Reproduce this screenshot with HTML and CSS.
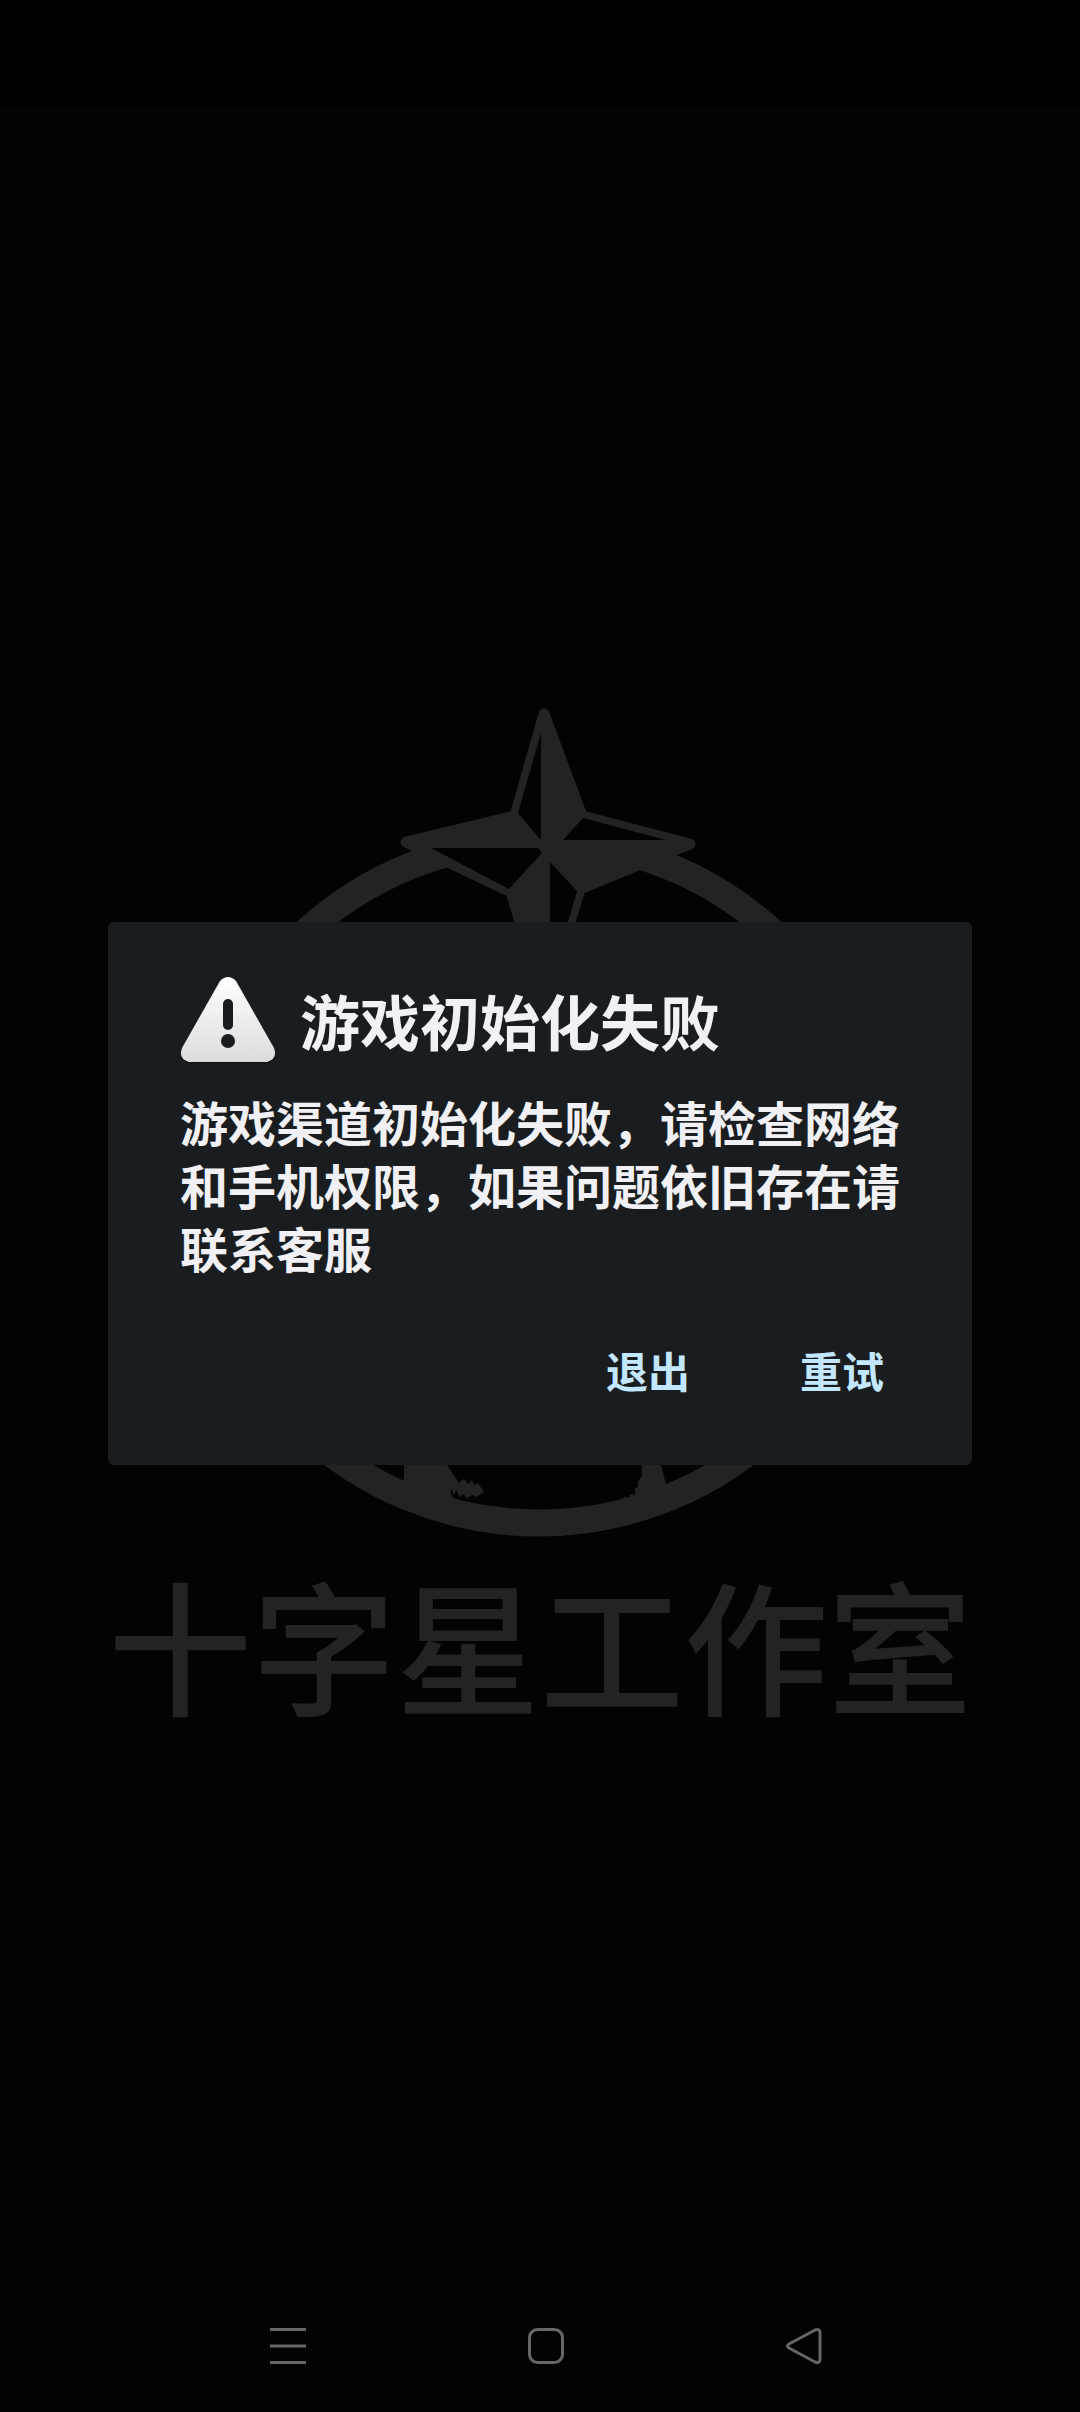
FILE: index.html
```html
<!DOCTYPE html>
<html lang="zh-CN">
<head>
    <meta charset="UTF-8">
    <meta name="viewport" content="width=device-width, initial-scale=1.0">
    <title>游戏初始化失败</title>
    <link rel="stylesheet" href="styles.css">
</head>
<body>
    <div class="status-bar"></div>

    <main class="stage">
        <!-- Splash screen behind the dialog -->
        <div class="splash">
            <svg class="splash-logo" viewBox="180 700 720 840" aria-hidden="true">
                <!-- Ring -->
                <ellipse cx="539" cy="1182" rx="343" ry="341" fill="none" stroke="#232323" stroke-width="27"/>

                <!-- Star -->
                <path d="M544 714 L582 816 L690 844 L580 889 L545 1005 L511 892 L406 842 L515 816 Z" fill="#232323" stroke="#232323" stroke-width="11" stroke-linejoin="round"/>
                <path d="M541 733 L518 813 L540 839 H541 Z" fill="#030303"/>
                <path d="M583 818 L666 840 H563 Z" fill="#030303"/>
                <path d="M431 848 H538 L542 853 L509 889 Z" fill="#030303"/>
                <path d="M550 862 L577 891 L550 985 Z" fill="#030303"/>

                <!-- Figures standing in the ring -->
                <path d="M404 1440 V1500 L440 1514 L456 1504 L451 1494 L451 1487 L454 1496 L456 1490 L460 1498 L463 1494 L467 1498 L472 1495 L476 1497 L484 1492 L478 1483 L474 1485 L472 1480 L468 1484 L464 1479 L459 1483 L447 1465 L440 1440 Z" fill="#232323"/>
                <path d="M640 1440 L642 1476 L638 1481 V1487 L635 1488 V1495 L630 1494 V1500 L625 1496 L619 1504 L620 1512 L668 1492 L661 1465 L660 1440 Z" fill="#232323"/>
            </svg>
            <p class="splash-name">十字星工作室</p>
        </div>

        <!-- Error dialog -->
        <section class="dialog" role="alertdialog" aria-labelledby="dialogTitle" aria-describedby="dialogMessage">
            <header class="dialog-header">
                <svg class="dialog-icon" viewBox="0 0 96 96" aria-hidden="true">
                    <defs>
                        <linearGradient id="warningFill" x1="0" y1="0" x2="0" y2="1">
                            <stop offset="0" stop-color="#ffffff"/>
                            <stop offset="1" stop-color="#dcdcdc"/>
                        </linearGradient>
                    </defs>
                    <path d="M40 9 Q48 1 56 9 L94 77 Q98 88 87 91 H9 Q-2 88 2 77 Z" fill="#0d0f10"/>
                    <path d="M40 9 Q48 1 56 9 L94 76 Q98 87 87 90 H9 Q-2 87 2 76 Z" fill="url(#warningFill)"/>
                    <rect x="43" y="27" width="10" height="31" rx="5" fill="#1a1d1f"/>
                    <circle cx="48" cy="69" r="7" fill="#1a1d1f"/>
                </svg>
                <h1 class="dialog-title" id="dialogTitle">游戏初始化失败</h1>
            </header>
            <p class="dialog-message" id="dialogMessage">游戏渠道初始化失败，请检查网络和手机权限，如果问题依旧存在请联系客服</p>
            <div class="dialog-actions">
                <button class="dialog-button" type="button">退出</button>
                <button class="dialog-button" type="button">重试</button>
            </div>
        </section>
    </main>

    <!-- System navigation -->
    <nav class="nav-bar">
        <button class="nav-button" type="button" aria-label="菜单">
            <svg class="nav-icon" viewBox="0 0 40 40">
                <path d="M2 3.5 H38 M2 20 H38 M2 36.5 H38"/>
            </svg>
        </button>
        <button class="nav-button" type="button" aria-label="主页">
            <svg class="nav-icon" viewBox="0 0 40 40">
                <rect x="3.5" y="3.5" width="33" height="33" rx="8"/>
            </svg>
        </button>
        <button class="nav-button" type="button" aria-label="返回">
            <svg class="nav-icon" viewBox="0 0 40 40">
                <path d="M5 18 L31 4 Q36 2 36 7 V33 Q36 38 31 36 L5 22 Q2 20 5 18 Z"/>
            </svg>
        </button>
    </nav>
</body>
</html>
```

FILE: styles.css
```css
* {
    margin: 0;
    padding: 0;
    box-sizing: border-box;
}

body {
    min-height: 100vh;
    display: flex;
    flex-direction: column;
    background: #030303;
    font-family: "Noto Sans CJK SC", sans-serif;
}

.status-bar {
    height: 106px;
    background: #000000;
}

/* The splash and the dialog share one grid cell */
.stage {
    flex: 1;
    display: grid;
    grid-template-columns: 100%;
    align-items: center;
    justify-items: center;
}

.splash,
.dialog {
    grid-area: 1 / 1;
}

/* Splash */
.splash {
    width: 100%;
    padding-top: 40px;
    display: flex;
    flex-direction: column;
    align-items: center;
    gap: 16px;
}

.splash-logo {
    width: 66.6667%;
}

.splash-name {
    color: #232323;
    font-size: 144px;
    font-weight: 500;
    line-height: 172px;
    white-space: nowrap;
}

/* Dialog */
.dialog {
    position: relative;
    width: 80%;
    padding: 50px 64px 48px 72px;
    border-radius: 6px;
    background: #1a1d1f;
    color: #f1f1f5;
}

.dialog-header {
    display: flex;
    align-items: center;
    gap: 24px;
}

.dialog-icon {
    width: 96px;
    height: 96px;
    flex-shrink: 0;
}

.dialog-title {
    font-size: 60px;
    font-weight: 700;
    line-height: 96px;
}

.dialog-message {
    margin-top: 22px;
    font-size: 48px;
    font-weight: 700;
    line-height: 63px;
}

.dialog-actions {
    margin-top: 42px;
    display: flex;
    justify-content: flex-end;
    gap: 62px;
}

.dialog-button {
    height: 96px;
    padding: 0 24px;
    border: none;
    background: none;
    color: #c2e7ff;
    font-family: inherit;
    font-size: 42px;
    font-weight: 700;
}

/* System navigation */
.nav-bar {
    height: 131px;
    padding: 0 246px 2px 258px;
    display: flex;
    justify-content: space-between;
    align-items: center;
}

.nav-button {
    width: 60px;
    height: 60px;
    border: none;
    background: none;
    display: flex;
    align-items: center;
    justify-content: center;
}

.nav-icon {
    width: 40px;
    height: 40px;
    fill: none;
    stroke: #666666;
    stroke-width: 3;
}
```
